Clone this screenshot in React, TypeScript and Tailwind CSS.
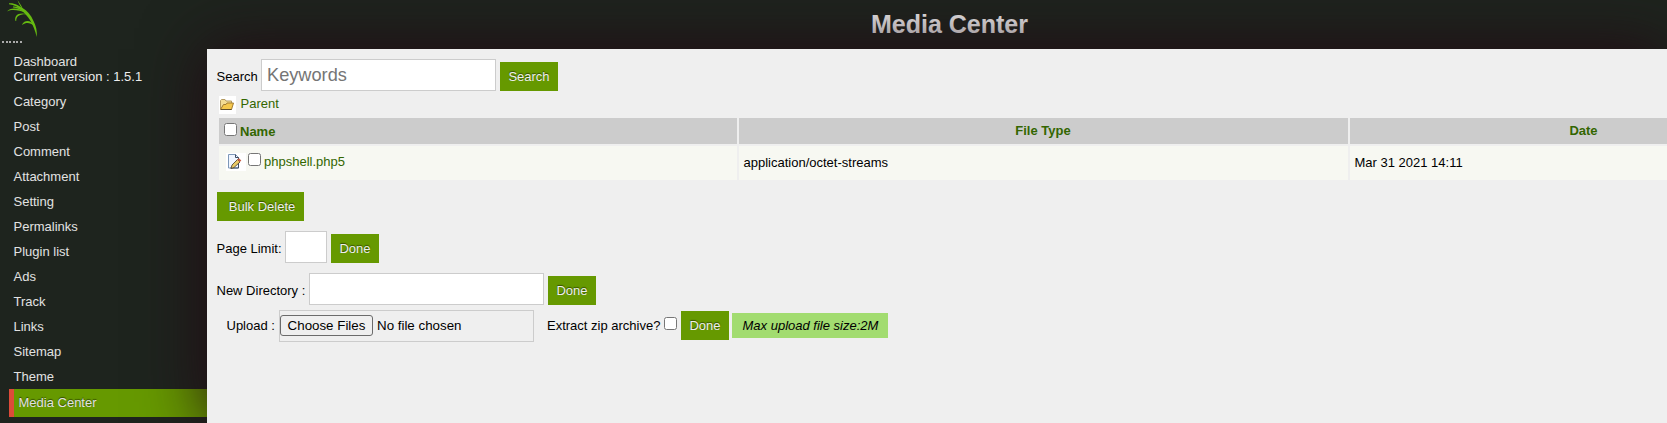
import React from 'react';

const menu = ['Category', 'Post', 'Comment', 'Attachment', 'Setting', 'Permalinks', 'Plugin list', 'Ads', 'Track', 'Links', 'Sitemap', 'Theme'];

function Check({ className = '' }: { className?: string }) {
  return <input type="checkbox" className={`m-0 block size-[13px] shrink-0 ${className}`} />;
}

function Button({ children, className = 'w-12' }: { children: React.ReactNode; className?: string }) {
  return (
    <button className={`h-[29px] shrink-0 bg-[#669900] text-center leading-[29px] text-[#eeeeee] [text-shadow:0_-1px_1px_rgba(0,0,0,0.5)] ${className}`}>
      {children}
    </button>
  );
}

function Logo() {
  return (
    <svg className="ml-[7px] block h-[37px] w-[31px]" viewBox="7 0 31 37" fill="#66bb11">
      <path d="M17.500 0C19 2.500 21 4.500 22.500 8C27 10.500 31 15 33.500 21C36 26 37.500 31 36.600 37C35.500 31 33 25 30 20C27.500 16 24.500 13 21.500 10.500L23 10C21 7.500 19 4 17.500 0Z" />
      <path d="M9 3.200C14 2.700 19 5 25 10.500L24 12C19 7.500 14 4.500 9 4.200Z" />
      <path d="M13 6.500C17 6 22 8 26 12.500C20 9.500 17 7.800 13 7.500Z" />
      <path d="M7 11.500C10 7.500 18 7 27 13C18 10 12 9 7 11.500Z" />
      <path d="M15.500 21C14 16 18 11.500 28 14.500C20 13.800 16.200 16 16.200 21Z" />
      <path d="M22 24.500C25 19.500 31 20 34.500 26C30 22.300 26 22 22.500 24.800Z" />
    </svg>
  );
}

function FolderIcon() {
  return (
    <svg className="block h-[18px] w-[17px] shrink-0" viewBox="0 0 17 18">
      <path fill="#fff" d="M0 0h17v18H0z" />
      <path d="M1.500 13.500V4.500l1-1h3.500l1 1.500h5.500V8" fill="#f3dc94" stroke="#b39a62" />
      <path d="M1.500 13.500L4.500 8.500h2.500l1-1.500h6.500L12.500 13.500Z" fill="#f5c84c" stroke="#a37c32" />
      <path d="M2 13.500h10.500" stroke="#5f4d2a" />
    </svg>
  );
}

function EditIcon() {
  return (
    <svg className="block h-[18px] w-[20px] shrink-0" viewBox="0 0 20 18">
      <path fill="#fff" d="M0 0h20v18H0z" />
      <path d="M2.500 1.500h7l3 3v10.500h-10Z" fill="#f0f6ff" stroke="#7d97b8" />
      <path d="M9.500 1.500v3h3V15h-8" fill="none" stroke="#3d4c61" />
      <path d="M5 15.500L6 12l5.500-5.500 2.500 2.500-6 5.500Z" fill="#e8c964" stroke="#443b2b" strokeWidth=".8" />
      <path d="M11.300 6.700l1.700-1.500 2.300 2.300-1.500 1.600Z" fill="#c85b43" />
    </svg>
  );
}

export default function App() {
  return (
    <div className="flex h-[423px] w-[1667px] flex-col overflow-hidden bg-[#1e241e] font-['Liberation_Sans',Arial,sans-serif] text-[13px] leading-[15px] text-black">
      <header className="flex h-[49px] shrink-0">
        <div className="w-[207px]">
          <Logo />
          <div className="ml-[2px] mt-[4px] flex gap-[1.600px]">
            {[0, 1, 2, 3, 4, 5].map((i) => <span key={i} className="h-[2px] w-[2px] bg-[#aaaaaa]" />)}
          </div>
        </div>
        <h1 className="flex-1 pl-[25px] pt-[8px] text-center text-[25px] font-bold leading-[32px] text-[#eeeeee]">
          Media Center
        </h1>
      </header>
      <div className="flex h-[374px]">
        <nav className="w-[207px] shrink-0 pt-[5px] text-[#e2e2e2]">
          <div className="mb-[10px] pl-[13.500px]">Dashboard<br /><span className="text-[#eeeeee]">Current version : 1.5.1</span></div>
          {menu.map((m) => <div key={m} className="mb-[10px] pl-[13.500px]">{m}</div>)}
          <div className="-mt-[5px] ml-[9px] h-[28px] border-l-[5px] border-[#dd4b39] bg-[#669900] pl-[4.500px] leading-[27px] [text-shadow:0_-1px_1px_rgba(0,0,0,0.5)]">Media Center</div>
        </nav>
        <main className="relative min-w-0 flex-1 bg-[#efefef] pl-[10px] pt-[10px] shadow-[0_0_60px_#220913]">
          <div className="flex h-8 items-end">
            <span className="-ml-[0.500px] mb-[7px] w-[44.500px]">Search</span>
            <input placeholder="Keywords" className="h-8 w-[235px] border border-[#cccccc] bg-white px-[5px] text-[18.200px] placeholder:text-[#757575]" />
            <Button className="ml-1 w-[58px]">Search</Button>
          </div>
          <div className="ml-[2px] mt-[5px] flex h-[18px]">
            <FolderIcon />
            <a className="ml-[4.500px] text-[#336600]">Parent</a>
          </div>
          <div className="ml-[2px] mt-[4px] grid grid-cols-[518px_609px_467px] gap-[2px] overflow-hidden">
            <div className="flex h-[26px] bg-[#cccccc] pl-[5px] pt-[5px] font-bold text-[#336600]">
              <Check /><span className="ml-[3px] mt-[1px]">Name</span>
            </div>
            <div className="bg-[#cccccc] pr-[1px] pt-[5px] text-center font-bold text-[#336600]">File Type</div>
            <div className="bg-[#cccccc] pt-[5px] text-center font-bold text-[#336600]">Date</div>
            <div className="flex h-[34px] bg-[#f7f8f2] pl-[7px] pt-[7px]">
              <EditIcon /><Check className="ml-[2px]" /><a className="ml-[3px] mt-[1px] text-[#336600]">phpshell.php5</a>
            </div>
            <div className="bg-[#f7f8f2] pl-[4.500px] pt-[9px]">application/octet-streams</div>
            <div className="bg-[#f7f8f2] pl-[4.500px] pt-[9px]">Mar 31 2021 14:11</div>
          </div>
          <Button className="mt-[12px] block w-[87px] pl-[3px]">Bulk Delete</Button>
          <div className="mt-[10px] flex h-8 items-end">
            <span className="-ml-[0.500px] mb-[7px] w-[68.500px]">Page Limit:</span>
            <input className="h-8 w-[42px] border border-[#cccccc] bg-white" />
            <Button className="ml-1 w-12">Done</Button>
          </div>
          <div className="mt-[10px] flex h-8 items-end">
            <span className="-ml-[0.500px] mb-[7px] w-[92.500px]">New Directory :</span>
            <input className="h-8 w-[235px] border border-[#cccccc] bg-white" />
            <Button className="ml-1 w-12">Done</Button>
          </div>
          <div className="ml-[10px] mt-[5px] flex h-8">
            <span className="-ml-[0.500px] mt-[8px] w-[52.500px]">Upload :</span>
            <div className="flex h-8 w-[255px] border border-[#cccccc]">
              <button className="mt-[4px] h-[21px] w-[93px] rounded-[3px] border border-[#6b6b6b] bg-[#efefef] text-[13.333px] leading-[19px]">Choose Files</button>
              <span className="ml-[4px] mt-[7px] text-[13.333px]">No file chosen</span>
            </div>
            <span className="ml-[13px] mt-[8px] w-[117px] whitespace-nowrap">Extract zip archive?</span>
            <Check className="mt-[7px]" />
            <Button className="ml-1 mt-[1px] w-12">Done</Button>
            <em className="ml-[3px] mt-[3px] h-[25px] w-[156px] whitespace-nowrap bg-[#a2dc70] pl-[10.500px] leading-[25px]">Max upload file size:2M</em>
          </div>
        </main>
      </div>
    </div>
  );
}
